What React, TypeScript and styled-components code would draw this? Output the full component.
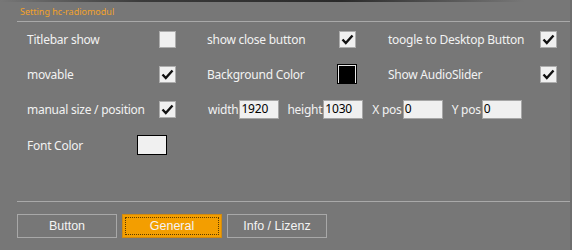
import React from "react";
import styled, { createGlobalStyle } from "styled-components";

const Global = createGlobalStyle`
  html, body { margin: 0; padding: 0; background: #777777; }
  body { width: 572px; height: 250px; overflow: hidden; }
`;

const Panel = styled.div`
  position: relative;
  width: 572px;
  height: 250px;
  box-sizing: border-box;
  background: #777777;
  border-right: 2px solid #6e6e6e;
  font-family: "Segoe UI", "Noto Sans", sans-serif;
  color: #f2f2f2;
  display: flex;
  flex-direction: column;
`;

const TopShade = styled.div`
  height: 2px;
  background: linear-gradient(90deg, #777 0%, #3a3a3a 25%, #2a2a2a 60%, #777 92%);
`;

const Title = styled.div`
  margin-left: 20px;
  height: 19px;
  line-height: 20px;
  font-size: 9px;
  color: #f2a22a;
`;

const Rule = styled.div`
  margin-left: 17px;
  height: 1px;
  background: #a9a9a9;
`;

const Body = styled.div`
  flex: 1;
  padding: 8px 0 0 27px;
  display: flex;
  flex-direction: column;
`;

const Row = styled.div<{ $h: number }>`
  display: flex;
  align-items: center;
  height: ${(p) => p.$h}px;
`;

const Label = styled.span<{ $w?: number; $pad?: number }>`
  font-size: 12px;
  letter-spacing: -0.25px;
  white-space: nowrap;
  box-sizing: border-box;
  padding-left: ${(p) => p.$pad ?? 0}px;
  width: ${(p) => (p.$w ? p.$w + "px" : "auto")};
  flex-shrink: 0;
`;

const Box = styled.span<{ $gap?: number }>`
  width: 17px;
  height: 17px;
  box-sizing: border-box;
  background: #f0f0f0;
  border: 1px solid #adadad;
  display: inline-flex;
  align-items: center;
  justify-content: center;
  margin-right: ${(p) => p.$gap ?? 0}px;
  flex-shrink: 0;
`;

const Swatch = styled.span<{ $w: number; $fill: string; $inner?: boolean }>`
  width: ${(p) => p.$w}px;
  height: 20px;
  box-sizing: border-box;
  background: ${(p) => p.$fill};
  border: 1px solid #000;
  box-shadow: ${(p) => (p.$inner ? "inset 1px 1px 0 #e8e8e8, inset -1px 0 0 #e8e8e8" : "none")};
  flex-shrink: 0;
`;

const Field = styled.span<{ $mr: number }>`
  width: 40px;
  height: 19px;
  box-sizing: border-box;
  background: #f0f0f0;
  border: 1px solid #a6a6a6;
  color: #000;
  font-size: 12px;
  letter-spacing: -0.2px;
  line-height: 16px;
  padding-left: 1px;
  margin-left: 1px;
  margin-right: ${(p) => p.$mr}px;
  flex-shrink: 0;
`;

const Footer = styled.div`
  padding: 12px 0 12px 17px;
  display: flex;
  gap: 5px;
`;

const Tab = styled.div<{ $active?: boolean }>`
  position: relative;
  width: 100px;
  height: 24px;
  box-sizing: border-box;
  border: 1px solid ${(p) => (p.$active ? "#d08a10" : "#a8a8a8")};
  background: ${(p) => (p.$active ? "#f39e00" : "transparent")};
  font-family: "Liberation Sans", Arial, sans-serif;
  font-size: 12.5px;
  color: #f4f4f4;
  display: flex;
  align-items: center;
  justify-content: center;
  &::after {
    content: "";
    display: ${(p) => (p.$active ? "block" : "none")};
    position: absolute;
    inset: 2px;
    border: 1px dotted #5a3a00;
  }
`;

function Check() {
  return (
    <svg width="13" height="11" viewBox="0 0 13 11">
      <path d="M1.5 5.5 L4.8 9 L11.5 1.5" fill="none" stroke="#111" strokeWidth="2.4" />
    </svg>
  );
}

function CheckBox({ on, gap }: { on?: boolean; gap?: number }) {
  return <Box $gap={gap}>{on ? <Check /> : null}</Box>;
}

export default function App() {
  return (
    <>
      <Global />
      <Panel>
        <TopShade />
        <Title>Setting hc-radiomodul</Title>
        <Rule />
        <Body>
          <Row $h={19}>
            <Label $w={132}>Titlebar show</Label>
            <CheckBox gap={31} />
            <Label $w={132}>show close button</Label>
            <CheckBox on gap={32} />
            <Label $w={152}>toogle to Desktop Button</Label>
            <CheckBox on />
          </Row>
          <Row $h={50}>
            <Label $w={132}>movable</Label>
            <CheckBox on gap={31} />
            <Label $w={130}>Background Color</Label>
            <Swatch $w={20} $fill="#000" $inner />
            <Label $w={183} $pad={31}>Show AudioSlider</Label>
            <CheckBox on />
          </Row>
          <Row $h={21}>
            <Label $w={132}>manual size / position</Label>
            <CheckBox on gap={32} />
            <Label>width</Label>
            <Field $mr={8}>1920</Field>
            <Label>height</Label>
            <Field $mr={9}>1030</Field>
            <Label>X pos</Label>
            <Field $mr={9}>0</Field>
            <Label>Y pos</Label>
            <Field $mr={0}>0</Field>
          </Row>
          <Row $h={50}>
            <Label $w={110}>Font Color</Label>
            <Swatch $w={30} $fill="#f0f0f0" />
          </Row>
        </Body>
        <Rule />
        <Footer>
          <Tab>Button</Tab>
          <Tab $active>General</Tab>
          <Tab>Info / Lizenz</Tab>
        </Footer>
      </Panel>
    </>
  );
}
